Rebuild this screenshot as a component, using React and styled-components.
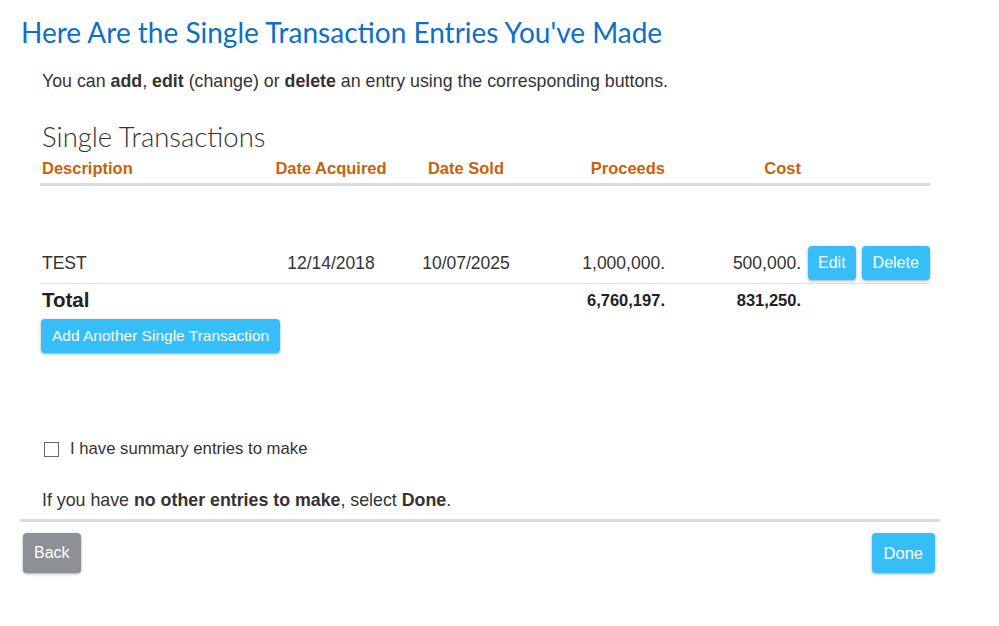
import React from "react";
import styled, { createGlobalStyle } from "styled-components";

const Global = createGlobalStyle`
  html, body { margin: 0; padding: 0; background: #fff; }
  body { font-family: "Liberation Sans", Arial, sans-serif; color: #333; }
`;

const Page = styled.div`
  width: 999px;
  height: 626px;
  box-sizing: border-box;
  padding: 13px 0 0 0;
`;

const Title = styled.h1`
  margin: 0 0 0 21px;
  font-family: Lato, "Open Sans", sans-serif;
  font-weight: 400;
  font-size: 28px;
  line-height: 38px;
  color: #0d6fc6;
`;

const Content = styled.div`
  padding-left: 42px;
`;

const Intro = styled.p`
  margin: 18px 0 0 0;
  font-size: 17.8px;
  line-height: 24px;
  color: #333;
`;

const SectionTitle = styled.h2`
  margin: 28px 0 0 0;
  font-family: Lato, "Open Sans", sans-serif;
  font-weight: 300;
  font-size: 27.5px;
  line-height: 32px;
  color: #333;
`;

const Table = styled.div`
  margin: 2px 0 0 40px;
  width: 890px;
`;

const cols = "220px 142px 128px 135px 136px 129px";

const HeadRow = styled.div`
  display: grid;
  grid-template-columns: ${cols};
  align-items: center;
  height: 26px;
  border-bottom: 3px solid #dcdcdc;
  padding-bottom: 2px;
`;

const Th = styled.div`
  font-size: 16.5px;
  font-weight: 700;
  color: #c8620a;
  text-align: ${(p) => p.$align || "left"};
  padding-left: ${(p) => (p.$align === "left" || !p.$align ? "2px" : "0")};
`;

const DataRow = styled.div`
  display: grid;
  grid-template-columns: ${cols};
  align-items: center;
  padding: 60px 0 3px 0;
  border-bottom: 1px solid #dddddd;
`;

const Td = styled.div`
  font-size: 17.5px;
  color: #333;
  text-align: ${(p) => p.$align || "left"};
  padding-left: ${(p) => (p.$align === "left" || !p.$align ? "2px" : "0")};
`;

const Actions = styled.div`
  display: flex;
  gap: 6px;
  padding-left: 7px;
`;

const Button = styled.button`
  border: none;
  border-radius: 4px;
  background: ${(p) => (p.$gray ? "#8d9095" : "#36bef9")};
  color: #fff;
  font-family: "Liberation Sans", Arial, sans-serif;
  font-size: ${(p) => p.$size || "16px"};
  height: ${(p) => p.$h || "34px"};
  padding: 0 ${(p) => p.$px || "10px"};
  box-shadow: 0 1px 3px rgba(0, 0, 0, 0.35);
  cursor: pointer;
  line-height: 1;
`;

const TotalRow = styled.div`
  display: grid;
  grid-template-columns: ${cols};
  align-items: center;
  height: 32px;
`;

const TotalLabel = styled.div`
  font-size: 20.5px;
  font-weight: 700;
  color: #222;
  padding-left: 2px;
`;

const TotalValue = styled.div`
  font-size: 16.5px;
  font-weight: 700;
  color: #222;
  text-align: right;
`;

const AddWrap = styled.div`
  margin: 3px 0 0 1px;
`;

const CheckLine = styled.label`
  display: flex;
  align-items: center;
  gap: 11px;
  margin: 86px 0 0 2px;
  font-size: 16.7px;
  color: #333;
`;

const Box = styled.span`
  width: 13px;
  height: 13px;
  border: 1px solid #666;
  background: #fff;
  display: inline-block;
`;

const Note = styled.p`
  margin: 29px 0 0 0;
  font-size: 17.8px;
  line-height: 24px;
  color: #333;
`;

const Footer = styled.div`
  margin: 7px 0 0 20px;
  width: 920px;
  border-top: 3px solid #dcdcdc;
  display: flex;
  justify-content: space-between;
  align-items: flex-start;
  padding: 11px 5px 0 3px;
  box-sizing: border-box;
`;

export default function App() {
  return (
    <Page>
      <Global />
      <Title>Here Are the Single Transaction Entries You've Made</Title>
      <Content>
        <Intro>
          You can <b>add</b>, <b>edit</b> (change) or <b>delete</b> an entry using the corresponding buttons.
        </Intro>
        <SectionTitle>Single Transactions</SectionTitle>
      </Content>
      <Table>
        <HeadRow>
          <Th>Description</Th>
          <Th $align="center">Date Acquired</Th>
          <Th $align="center">Date Sold</Th>
          <Th $align="right">Proceeds</Th>
          <Th $align="right">Cost</Th>
          <div />
        </HeadRow>
        <DataRow>
          <Td>TEST</Td>
          <Td $align="center">12/14/2018</Td>
          <Td $align="center">10/07/2025</Td>
          <Td $align="right">1,000,000.</Td>
          <Td $align="right">500,000.</Td>
          <Actions>
            <Button $px="10px">Edit</Button>
            <Button $px="11px">Delete</Button>
          </Actions>
        </DataRow>
        <TotalRow>
          <TotalLabel>Total</TotalLabel>
          <div />
          <div />
          <TotalValue>6,760,197.</TotalValue>
          <TotalValue>831,250.</TotalValue>
          <div />
        </TotalRow>
        <AddWrap>
          <Button $size="15.5px" $px="11px">Add Another Single Transaction</Button>
        </AddWrap>
      </Table>
      <Content>
        <CheckLine>
          <Box />
          I have summary entries to make
        </CheckLine>
        <Note>
          If you have <b>no other entries to make</b>, select <b>Done</b>.
        </Note>
      </Content>
      <Footer>
        <Button $gray $h="40px" $px="11px">Back</Button>
        <Button $h="40px" $px="12px" $size="16.5px">Done</Button>
      </Footer>
    </Page>
  );
}
